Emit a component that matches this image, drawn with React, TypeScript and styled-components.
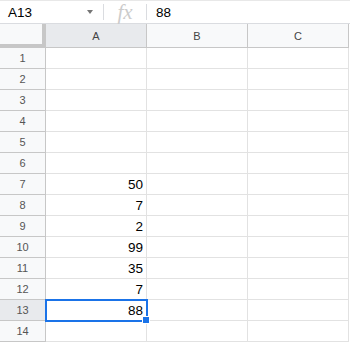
import React from 'react';
import styled, { createGlobalStyle, css } from 'styled-components';

const GlobalStyle = createGlobalStyle`
  body {
    margin: 0;
    background: #ffffff;
    font-family: Arial, "Liberation Sans", sans-serif;
  }
`;

const Sheet = styled.div`
  width: 350px;
  height: 343px;
  overflow: hidden;
  background: #ffffff;
`;

const FormulaBar = styled.div`
  display: flex;
  align-items: center;
  height: 24px;
  border-top: 1px solid #e8e8e8;
  border-bottom: 1px solid #dadce0;
  box-sizing: border-box;
  color: #000000;
  font-size: 13.5px;
`;

const NameBox = styled.div`
  display: flex;
  align-items: center;
  justify-content: space-between;
  width: 103px;
  padding: 0 8px 0 8px;
  box-sizing: border-box;
`;

const Caret = styled.span`
  width: 0;
  height: 0;
  border-left: 3.5px solid transparent;
  border-right: 3.5px solid transparent;
  border-top: 4px solid #757575;
  margin-right: 2px;
`;

const Divider = styled.div`
  width: 1px;
  height: 16px;
  background: #dadce0;
`;

const Fx = styled.div`
  width: 42px;
  text-align: center;
  font-family: "Liberation Serif", "DejaVu Serif", serif;
  font-style: italic;
  font-size: 21px;
  color: #cccccc;
  line-height: 20px;
`;

const FormulaValue = styled.div`
  padding-left: 9px;
`;

const Grid = styled.div`
  display: grid;
  grid-template-columns: 46px 101px 101px 101px;
  grid-template-rows: 24px repeat(14, 21px);
`;

const Corner = styled.div`
  background: #f8f9fa;
  border-right: 4px solid #c7c7c7;
  border-bottom: 4px solid #c7c7c7;
  box-sizing: border-box;
`;

const ColHeader = styled.div<{ $active?: boolean }>`
  display: flex;
  align-items: center;
  justify-content: center;
  background: ${({ $active }) => ($active ? '#e8eaed' : '#f8f9fa')};
  border-right: 1px solid #c7c7c7;
  border-bottom: 1px solid #c7c7c7;
  box-sizing: border-box;
  font-size: 11px;
  color: #444444;
`;

const RowHeader = styled.div<{ $active?: boolean }>`
  display: flex;
  align-items: center;
  justify-content: center;
  background: ${({ $active }) => ($active ? '#e8eaed' : '#f8f9fa')};
  border-right: 1px solid #c7c7c7;
  border-bottom: 1px solid #c7c7c7;
  box-sizing: border-box;
  font-size: 11px;
  color: #555555;
`;

const Cell = styled.div<{ $selected?: boolean }>`
  position: relative;
  display: flex;
  align-items: center;
  justify-content: flex-end;
  padding-right: 3px;
  border-right: 1px solid #e2e2e2;
  border-bottom: 1px solid #e2e2e2;
  box-sizing: border-box;
  font-size: 13.5px;
  color: #000000;

  ${({ $selected }) =>
    $selected &&
    css`
      outline: 2px solid #1a73e8;
      outline-offset: -1px;
      z-index: 1;

      &::after {
        content: '';
        position: absolute;
        right: -4px;
        bottom: -4px;
        width: 6px;
        height: 6px;
        background: #1a73e8;
        border: 1px solid #ffffff;
      }
    `}
`;

const columns = ['A', 'B', 'C'];
const values: Record<number, string> = {
  7: '50',
  8: '7',
  9: '2',
  10: '99',
  11: '35',
  12: '7',
  13: '88',
};
const activeRow = 13;

export default function App() {
  const rows = Array.from({ length: 14 }, (_, i) => i + 1);
  return (
    <Sheet>
      <GlobalStyle />
      <FormulaBar>
        <NameBox>
          A13
          <Caret />
        </NameBox>
        <Divider />
        <Fx>fx</Fx>
        <Divider />
        <FormulaValue>88</FormulaValue>
      </FormulaBar>
      <Grid>
        <Corner />
        {columns.map((c) => (
          <ColHeader key={c} $active={c === 'A'}>
            {c}
          </ColHeader>
        ))}
        {rows.map((r) => (
          <React.Fragment key={r}>
            <RowHeader $active={r === activeRow}>{r}</RowHeader>
            {columns.map((c) => (
              <Cell key={c} $selected={c === 'A' && r === activeRow}>
                {c === 'A' ? values[r] : ''}
              </Cell>
            ))}
          </React.Fragment>
        ))}
      </Grid>
    </Sheet>
  );
}
